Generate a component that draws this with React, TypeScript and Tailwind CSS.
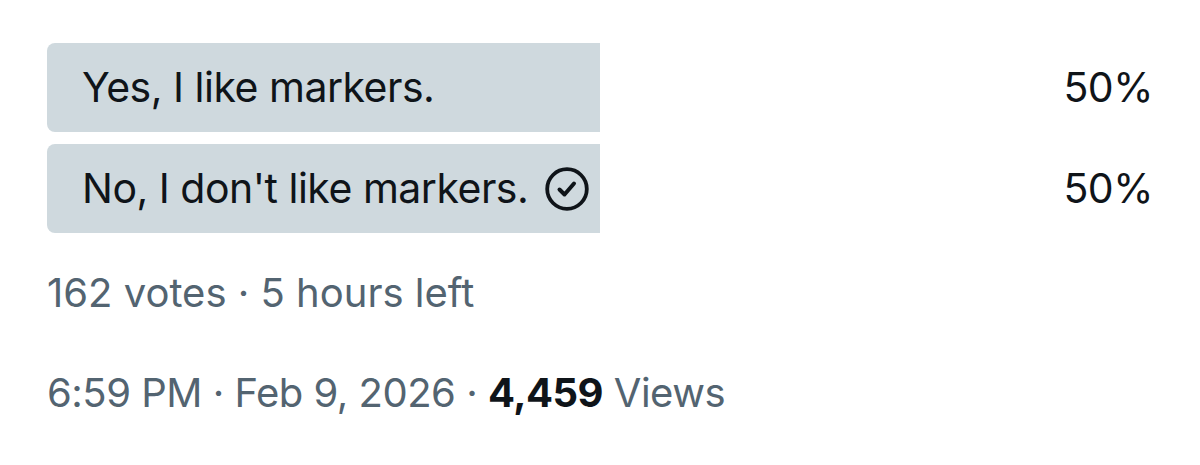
import React from "react";

function CheckCircle() {
  return (
    <svg width="44" height="44" viewBox="0 0 44 44" fill="none" className="shrink-0">
      <circle cx="22" cy="22" r="19.8" stroke="#0f1419" strokeWidth="3.8" />
      <path d="M14.5 22.5 L19.5 27.5 L29 16.5" stroke="#0f1419" strokeWidth="4" strokeLinecap="round" strokeLinejoin="round" />
    </svg>
  );
}

export default function App() {
  const font = { fontFamily: "Inter, 'Noto Sans', sans-serif" };
  return (
    <div className="w-[1200px] h-[465px] bg-white overflow-hidden pl-[47px] pt-[43px]" style={font}>
      <div className="w-[1106px] flex flex-col gap-[12px]">
        <div className="flex items-center justify-between">
          <div className="h-[89px] w-[553px] rounded-l-[8px] bg-[#cfd9de] flex items-center pl-[35px] text-[41px] text-[#0f1419] tracking-[-0.5px]">
            Yes, I like markers.
          </div>
          <div className="text-[41px] text-[#0f1419] tracking-[-0.5px]">50%</div>
        </div>
        <div className="flex items-center justify-between">
          <div className="h-[89px] w-[553px] rounded-l-[8px] bg-[#cfd9de] flex items-center pl-[35px] gap-[17px] text-[41px] text-[#0f1419] tracking-[-0.5px]">
            <span>No, I don't like markers.</span>
            <CheckCircle />
          </div>
          <div className="text-[41px] text-[#0f1419] tracking-[-0.5px]">50%</div>
        </div>
      </div>
      <div className="mt-[36px] text-[40px] leading-[48px] text-[#536471]">
        162 votes · 5 hours left
      </div>
      <div className="mt-[52px] text-[40px] leading-[48px] text-[#536471] tracking-[-0.5px]">
        6:59 PM · Feb 9, 2026 · <span className="font-bold text-[#0f1419]">4,459</span> Views
      </div>
    </div>
  );
}
